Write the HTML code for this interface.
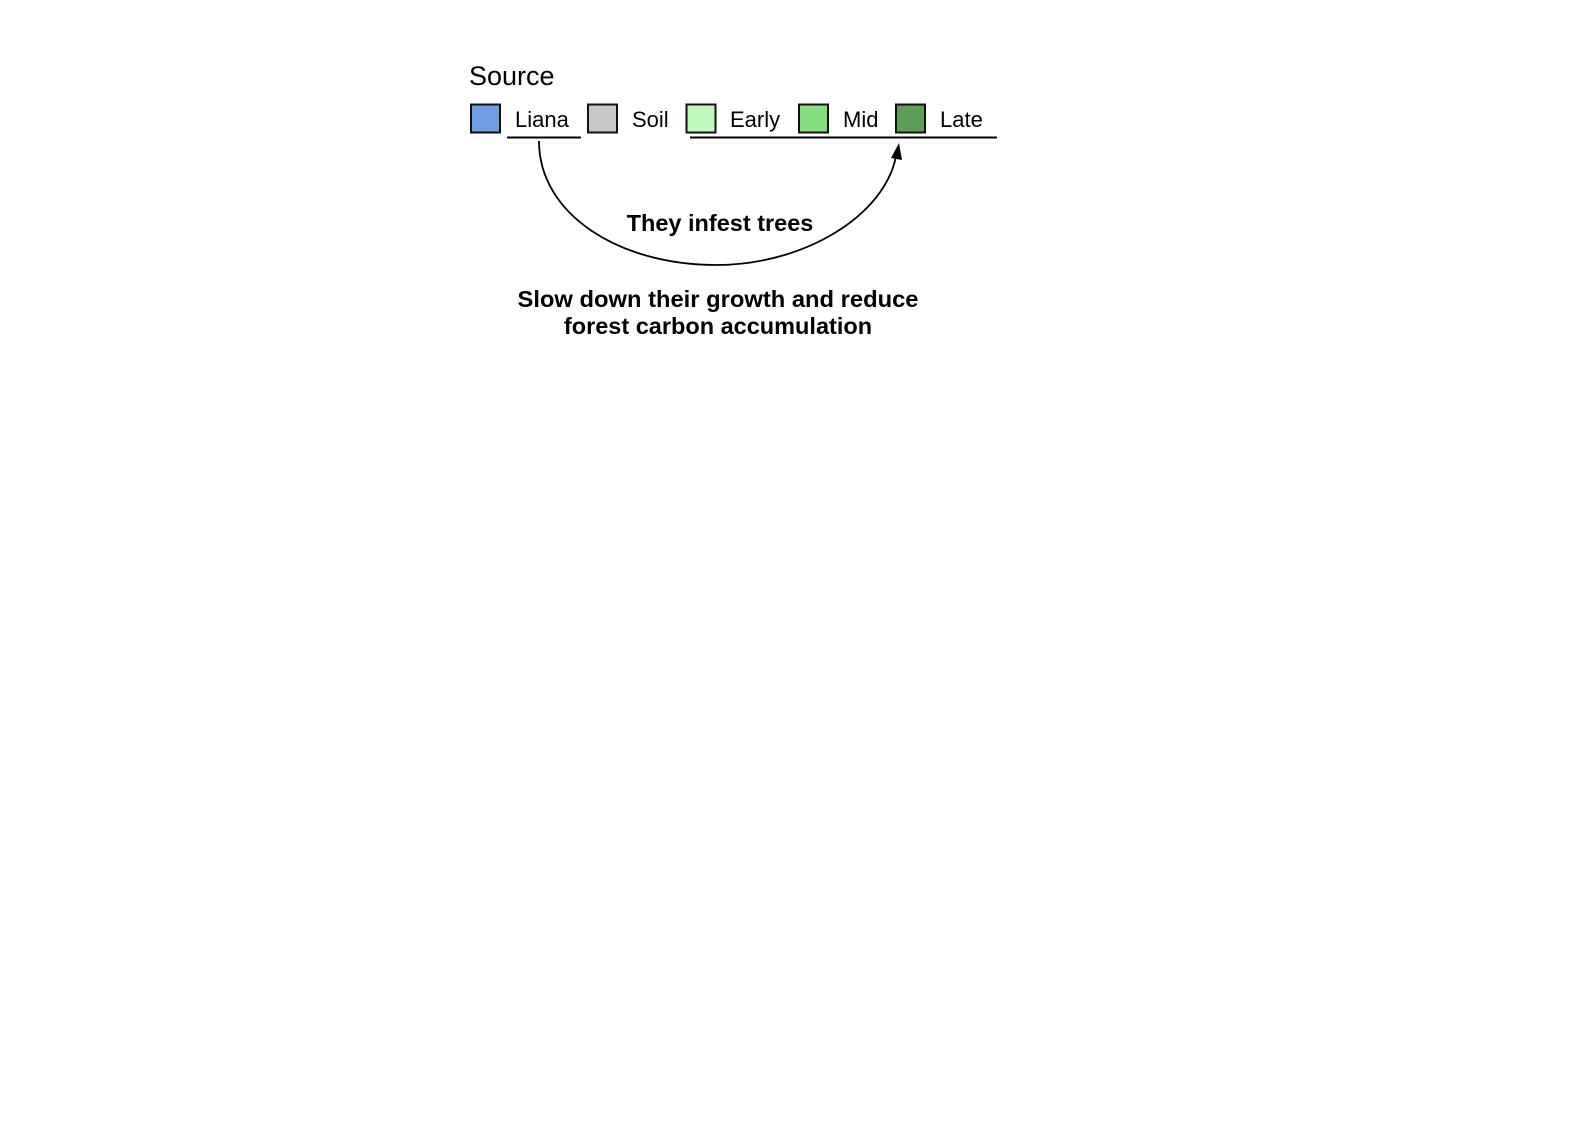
<!DOCTYPE html>
<html><head><meta charset="utf-8"><style>
html,body{margin:0;padding:0;background:#fff;}
svg{display:block;}
text{font-family:"Liberation Sans",sans-serif;fill:#000;}
</style></head><body>
<svg width="1588" height="1122" viewBox="0 0 1588 1122" xmlns="http://www.w3.org/2000/svg">
<text x="469" y="85" font-size="27">Source</text>
<rect x="471" y="104.5" width="29" height="28" fill="#6f9ee0" stroke="#111" stroke-width="2"/>
<text x="515" y="127" font-size="22">Liana</text>
<rect x="588" y="104.5" width="29" height="28" fill="#c8c8c8" stroke="#111" stroke-width="2"/>
<text x="632" y="127" font-size="22">Soil</text>
<rect x="686.5" y="104.5" width="29" height="28" fill="#c0fbbd" stroke="#111" stroke-width="2"/>
<text x="730" y="127" font-size="22">Early</text>
<rect x="799" y="104.5" width="29" height="28" fill="#86df7e" stroke="#111" stroke-width="2"/>
<text x="843" y="127" font-size="22">Mid</text>
<rect x="896" y="104.5" width="29" height="28" fill="#5f9e58" stroke="#111" stroke-width="2"/>
<text x="940" y="127" font-size="22">Late</text>
<line x1="507" y1="137.5" x2="581" y2="137.5" stroke="#000" stroke-width="2"/>
<line x1="690" y1="137.5" x2="997" y2="137.5" stroke="#000" stroke-width="2"/>
<path d="M539 141 C539 215 620 265 716 265 C805 265 885 215 896 156" fill="none" stroke="#000" stroke-width="1.8"/>
<polygon points="899,143 891,158 902,160" fill="#000"/>
<text x="720" y="231" font-size="23.5" font-weight="bold" text-anchor="middle">They infest trees</text>
<text x="718" y="307" font-size="23.5" font-weight="bold" text-anchor="middle" textLength="401" lengthAdjust="spacingAndGlyphs">Slow down their growth and reduce</text>
<text x="718" y="334" font-size="23.5" font-weight="bold" text-anchor="middle">forest carbon accumulation</text>
</svg>
</body></html>
